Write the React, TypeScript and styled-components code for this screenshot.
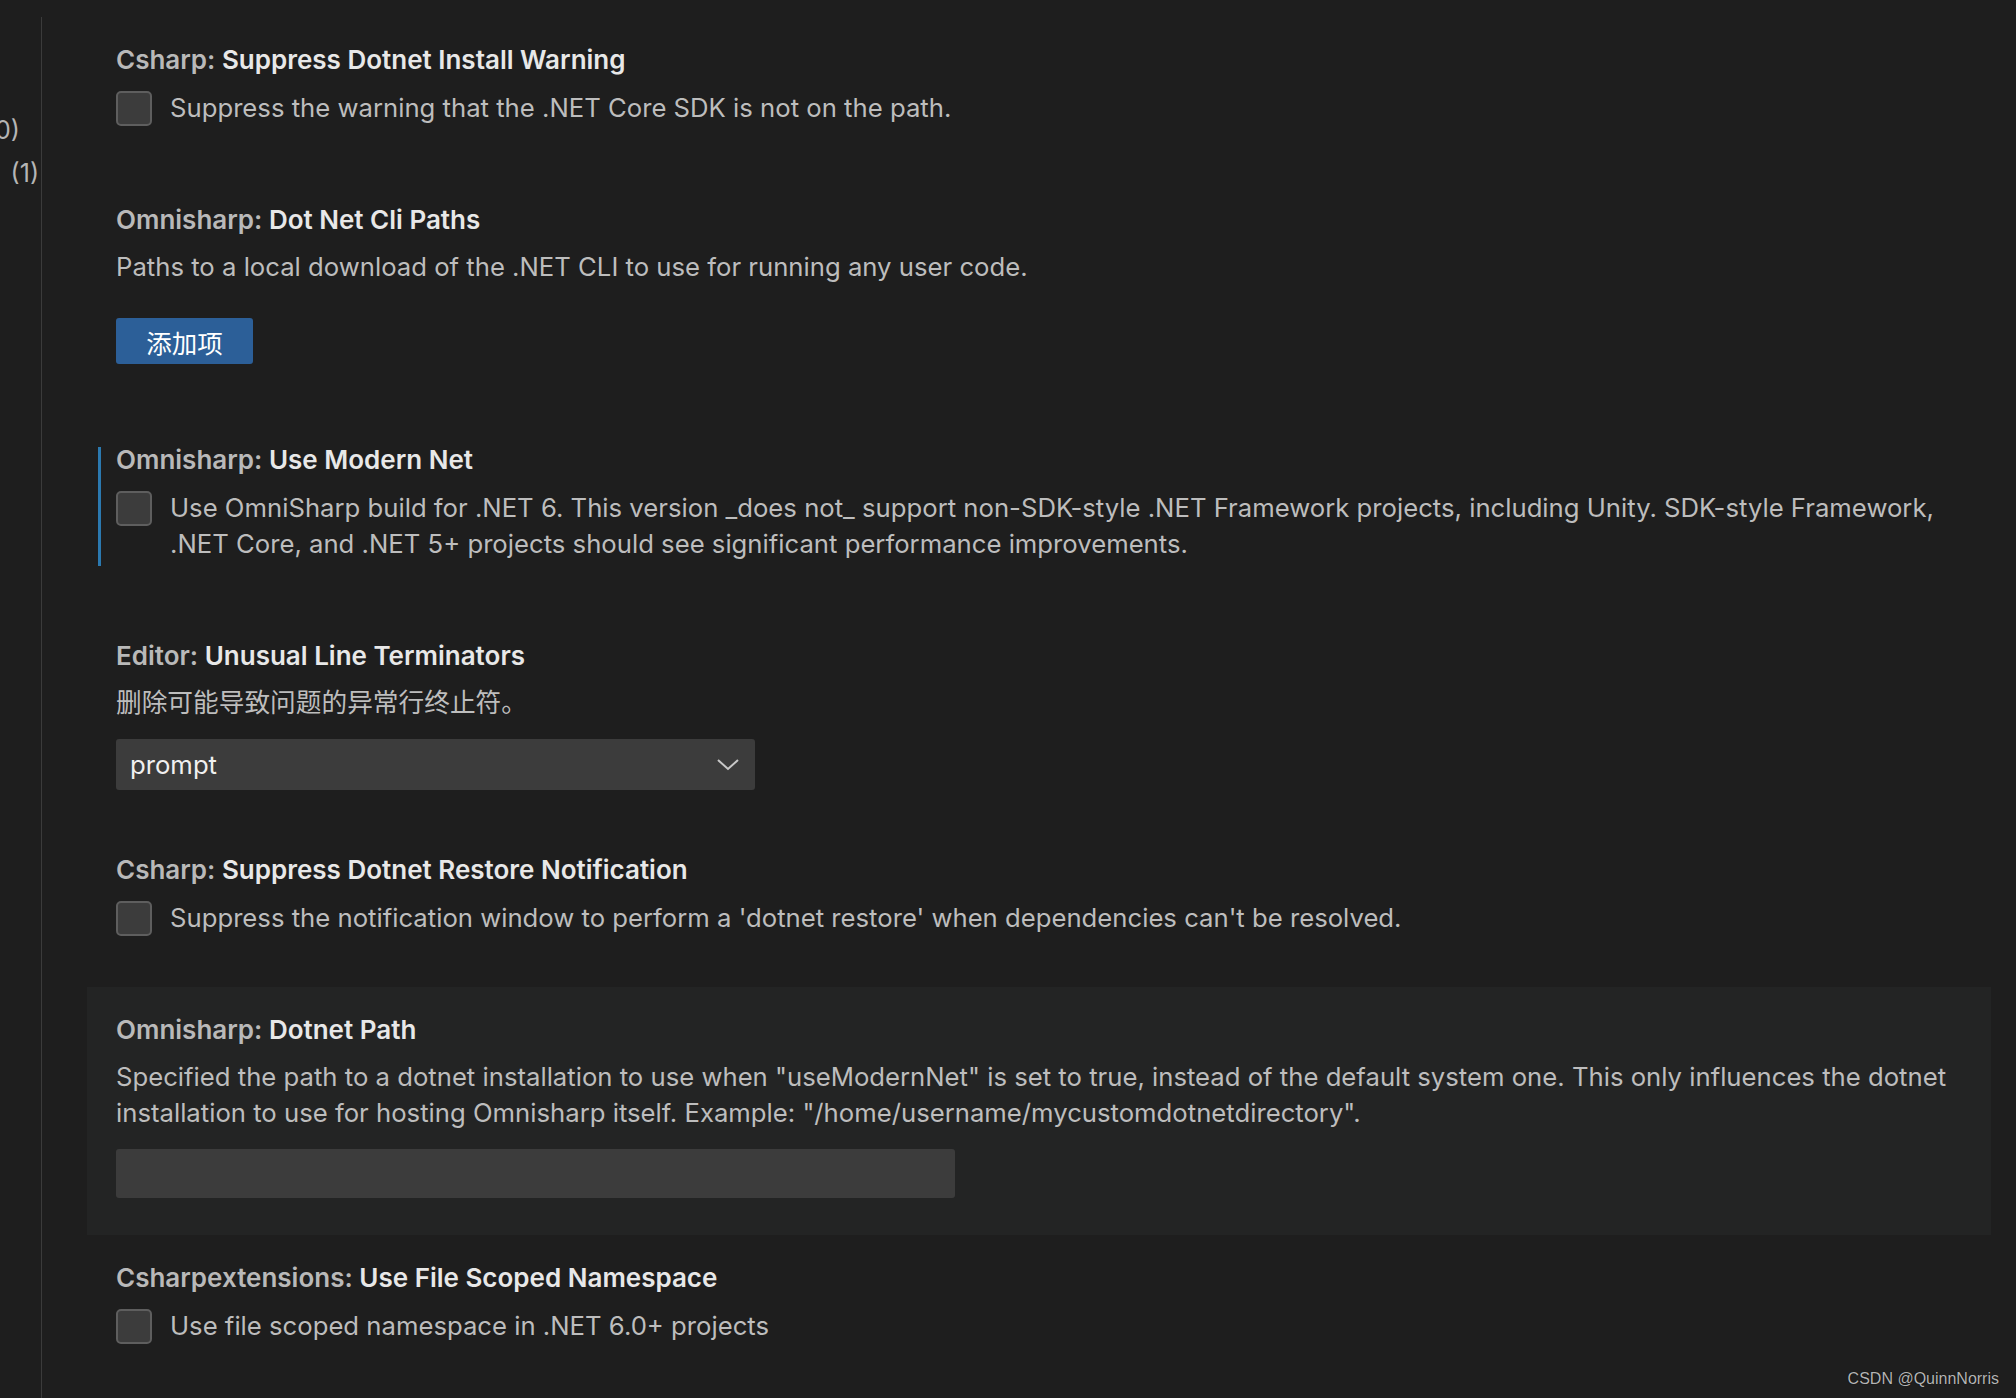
import styled, { createGlobalStyle } from "styled-components";

type Kind = "bool" | "list" | "enum" | "string";

interface Setting {
  id: string;
  category: string;
  label: string;
  kind: Kind;
  description: string;
  value?: string;
  focused?: boolean;
  hovered?: boolean;
}

const settings: Setting[] = [
  {
    id: "csharp.suppressDotnetInstallWarning",
    category: "Csharp",
    label: "Suppress Dotnet Install Warning",
    kind: "bool",
    description: "Suppress the warning that the .NET Core SDK is not on the path.",
  },
  {
    id: "omnisharp.dotNetCliPaths",
    category: "Omnisharp",
    label: "Dot Net Cli Paths",
    kind: "list",
    description: "Paths to a local download of the .NET CLI to use for running any user code.",
  },
  {
    id: "omnisharp.useModernNet",
    category: "Omnisharp",
    label: "Use Modern Net",
    kind: "bool",
    focused: true,
    description:
      "Use OmniSharp build for .NET 6. This version _does not_ support non-SDK-style .NET Framework projects, including Unity. SDK-style Framework, .NET Core, and .NET 5+ projects should see significant performance improvements.",
  },
  {
    id: "editor.unusualLineTerminators",
    category: "Editor",
    label: "Unusual Line Terminators",
    kind: "enum",
    value: "prompt",
    description: "删除可能导致问题的异常行终止符。",
  },
  {
    id: "csharp.suppressDotnetRestoreNotification",
    category: "Csharp",
    label: "Suppress Dotnet Restore Notification",
    kind: "bool",
    description: "Suppress the notification window to perform a 'dotnet restore' when dependencies can't be resolved.",
  },
  {
    id: "omnisharp.dotnetPath",
    category: "Omnisharp",
    label: "Dotnet Path",
    kind: "string",
    hovered: true,
    description:
      'Specified the path to a dotnet installation to use when "useModernNet" is set to true, instead of the default system one. This only influences the dotnet installation to use for hosting Omnisharp itself. Example: "/home/username/mycustomdotnetdirectory".',
  },
  {
    id: "csharpextensions.useFileScopedNamespace",
    category: "Csharpextensions",
    label: "Use File Scoped Namespace",
    kind: "bool",
    description: "Use file scoped namespace in .NET 6.0+ projects",
  },
];

// table of contents is scrolled mostly out of view; only the counts peek in
const tocEntries = [
  { label: "Text Editor", count: "(10)", inset: 21, gap: 8 },
  { label: "Extensions", count: "(1)", inset: 2, gap: 14 },
];

export default function App() {
  return (
    <>
      <GlobalStyle />
      <Page>
        <Toc>
          {tocEntries.map((entry) => (
            <TocRow key={entry.label} $inset={entry.inset} $gap={entry.gap}>
              <span>{entry.label}</span>
              <span>{entry.count}</span>
            </TocRow>
          ))}
        </Toc>
        <List>
          {settings.map((s) => (
            <Row key={s.id} $hovered={!!s.hovered} $focused={!!s.focused}>
              <Title>
                <Category>{s.category}: </Category>
                <Label>{s.label}</Label>
              </Title>
              {s.kind === "bool" ? (
                <BoolRow>
                  <Checkbox role="checkbox" aria-checked="false" />
                  <Description>{s.description}</Description>
                </BoolRow>
              ) : (
                <>
                  <Description $spaced>{s.description}</Description>
                  {s.kind === "list" && <AddButton>添加项</AddButton>}
                  {s.kind === "enum" && (
                    <Select>
                      <span>{s.value}</span>
                      <svg width="24" height="24" viewBox="0 0 24 24" fill="none">
                        <polyline points="2,7 12,16 22,7" stroke="#c8c8c8" strokeWidth="2" />
                      </svg>
                    </Select>
                  )}
                  {s.kind === "string" && <TextInput />}
                </>
              )}
            </Row>
          ))}
        </List>
        <Watermark>CSDN @QuinnNorris</Watermark>
      </Page>
    </>
  );
}

const GlobalStyle = createGlobalStyle`
  html, body {
    margin: 0;
    padding: 0;
    overflow: hidden;
    background: #1e1e1e;
  }
  body {
    font-family: Inter, "Noto Sans", "Noto Sans CJK SC", sans-serif;
  }
`;

const Page = styled.div`
  position: relative;
  display: flex;
  width: 2016px;
  height: 1398px;
  padding-top: 17px;
  box-sizing: border-box;
  background: #1e1e1e;
`;

const Toc = styled.nav`
  flex: 0 0 41px;
  padding-top: 91px;
  border-right: 1px solid #3b3b3b;
  box-sizing: content-box;
  overflow: hidden;
`;

const TocRow = styled.div<{ $inset: number; $gap: number }>`
  display: flex;
  justify-content: flex-end;
  align-items: center;
  gap: ${(p) => p.$gap}px;
  height: 43px;
  padding-right: ${(p) => p.$inset}px;
  white-space: nowrap;
  overflow: hidden;
  font-size: 25px;
  color: #b5b5b5;
`;

const List = styled.main`
  flex: 1;
  padding: 0 25px 0 45px;
`;

const Row = styled.section<{ $hovered: boolean; $focused: boolean }>`
  position: relative;
  padding: 26px 30px 37px 29px;
  background: ${(p) => (p.$hovered ? "#232424" : "transparent")};

  &::before {
    content: "";
    display: ${(p) => (p.$focused ? "block" : "none")};
    position: absolute;
    left: 11px;
    top: 30px;
    bottom: 47px;
    width: 3px;
    background: #2b79b0;
  }
`;

const Title = styled.div`
  height: 34px;
  line-height: 34px;
  font-size: 26px;
  font-weight: 600;
  white-space: nowrap;
`;

const Category = styled.span`
  color: #b9b9b9;
`;

const Label = styled.span`
  color: #e8e8e8;
`;

const Description = styled.div<{ $spaced?: boolean }>`
  margin-top: ${(p) => (p.$spaced ? "12px" : "-1px")};
  font-size: 25.7px;
  line-height: 36px;
  color: #bdbdbd;
`;

const BoolRow = styled.div`
  display: flex;
  align-items: flex-start;
  gap: 18px;
  margin: 14px 0;
`;

const Checkbox = styled.div`
  flex: 0 0 auto;
  width: 36px;
  height: 35px;
  box-sizing: border-box;
  border: 2px solid #5e5e5e;
  border-radius: 5px;
  background: #3c3c3c;
`;

const AddButton = styled.button`
  display: block;
  width: 137px;
  height: 46px;
  margin: 33px 0 16px;
  padding: 0;
  border: none;
  border-radius: 3px;
  background: #2c5f98;
  color: #ffffff;
  font-family: "Noto Sans CJK SC", sans-serif;
  font-size: 25.5px;
`;

const Select = styled.div`
  display: flex;
  align-items: center;
  justify-content: space-between;
  width: 639px;
  height: 51px;
  margin-top: 18px;
  padding: 0 15px 0 14px;
  box-sizing: border-box;
  border-radius: 3px;
  background: #3c3c3c;
  color: #f0f0f0;
  font-size: 25.7px;
`;

const TextInput = styled.div`
  width: 839px;
  height: 49px;
  margin-top: 18px;
  border-radius: 3px;
  background: #3c3c3c;
`;

const Watermark = styled.div`
  position: absolute;
  right: 17px;
  bottom: 10px;
  font-family: "Liberation Sans", Arial, sans-serif;
  font-size: 16px;
  color: #b4b4b4;
  text-shadow: 0 0 1px #000;
`;
